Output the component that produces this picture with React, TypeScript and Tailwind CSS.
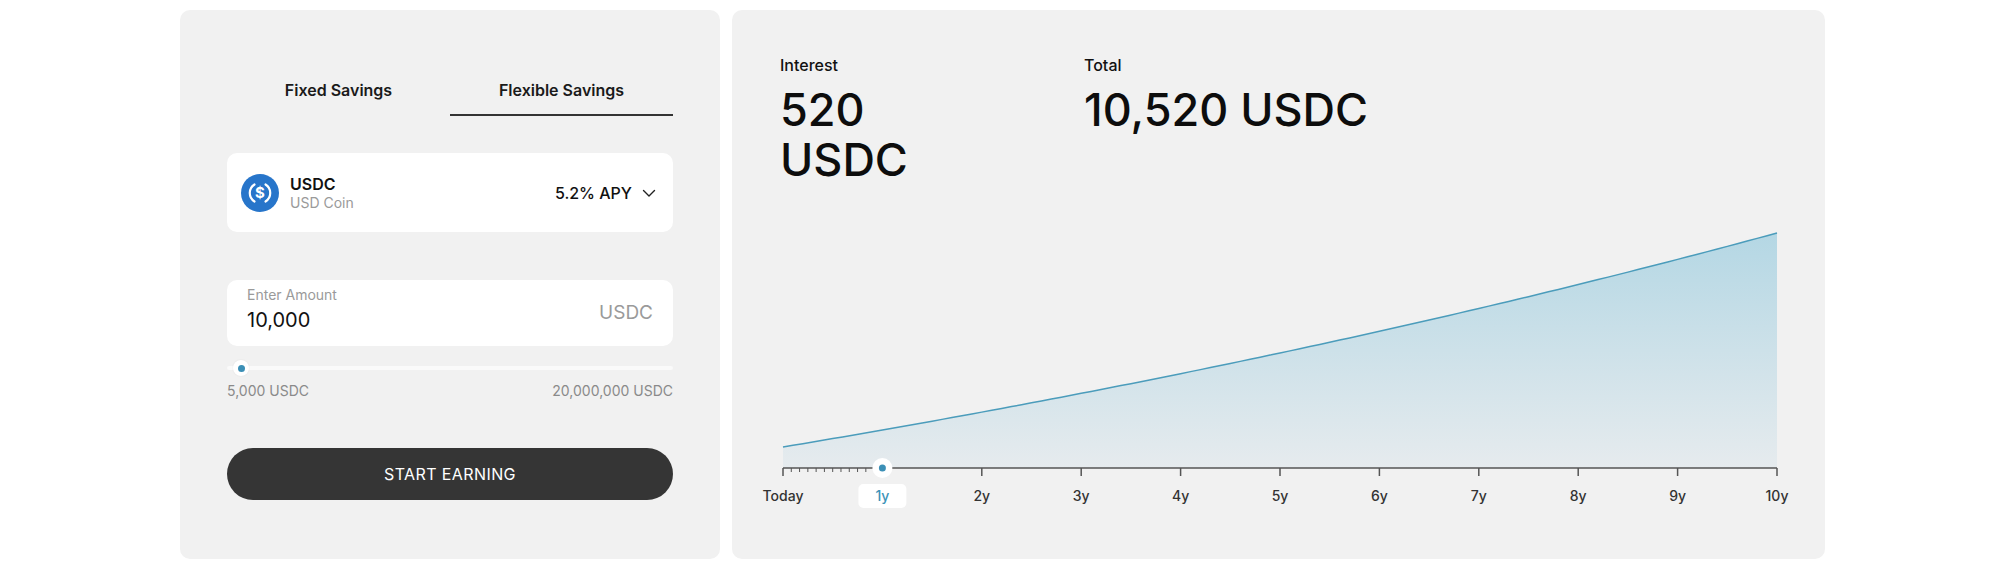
import React from "react";

const years = [0, 1, 2, 3, 4, 5, 6, 7, 8, 9, 10];
const X0 = 3;
const STEP = 99.4;
const BASE = 249;

const xAt = (t: number) => X0 + t * STEP;
const yAt = (t: number) =>
  BASE - (21 + 214 * ((Math.pow(1.05, t) - 1) / (Math.pow(1.05, 10) - 1)));

function buildPaths() {
  const pts: string[] = [];
  for (let i = 0; i <= 100; i++) {
    const t = i / 10;
    pts.push(`${xAt(t).toFixed(2)},${yAt(t).toFixed(2)}`);
  }
  const line = "M" + pts.join(" L");
  const area = `${line} L${xAt(10).toFixed(2)},${BASE} L${xAt(0).toFixed(2)},${BASE} Z`;
  return { line, area };
}

function UsdcIcon() {
  return (
    <svg width="38" height="38" viewBox="0 0 38 38">
      <circle cx="19" cy="19" r="19" fill="#2775CA" />
      <path d="M13.5 10.5 A10 10 0 0 0 13.5 27.5" fill="none" stroke="#fff" strokeWidth="2.2" strokeLinecap="round" />
      <path d="M24.5 10.5 A10 10 0 0 1 24.5 27.5" fill="none" stroke="#fff" strokeWidth="2.2" strokeLinecap="round" />
      <text
        x="19"
        y="19.5"
        textAnchor="middle"
        dominantBaseline="middle"
        fill="#fff"
        fontSize="15"
        fontWeight="700"
        fontFamily="Inter, sans-serif"
      >
        $
      </text>
    </svg>
  );
}

function Chevron() {
  return (
    <svg width="14" height="14" viewBox="0 0 14 14" className="ml-[10px]">
      <path d="M1.5 4.5 L7 10 L12.5 4.5" fill="none" stroke="#222" strokeWidth="1.4" strokeLinecap="round" strokeLinejoin="round" />
    </svg>
  );
}

function SavingsForm() {
  return (
    <div className="w-[540px] h-[549px] shrink-0 rounded-[10px] bg-[#f1f1f1] px-[47px] pt-[68px]">
      {/* tabs */}
      <div className="grid grid-cols-2">
        <button className="pb-[12px] border-b-2 border-transparent text-[16px] leading-[24px] font-semibold text-[#1a1a1a]">
          Fixed Savings
        </button>
        <button className="pb-[12px] border-b-2 border-[#333] text-[16px] leading-[24px] font-semibold text-[#1a1a1a]">
          Flexible Savings
        </button>
      </div>

      {/* asset */}
      <div className="mt-[37px] h-[79px] rounded-[10px] bg-white px-[14px] flex items-center justify-between">
        <div className="flex items-center gap-[11px]">
          <UsdcIcon />
          <div>
            <p className="text-[16px] leading-[20px] font-semibold text-[#111]">USDC</p>
            <p className="text-[14px] leading-[18px] text-[#9a9a9a]">USD Coin</p>
          </div>
        </div>
        <div className="flex items-center pr-[3px]">
          <span className="text-[16px] leading-[20px] font-medium text-[#111]">5.2% APY</span>
          <Chevron />
        </div>
      </div>

      {/* amount */}
      <div className="mt-[48px] h-[66px] rounded-[10px] bg-white px-[20px] flex items-center justify-between">
        <div className="self-start pt-[6px]">
          <p className="text-[14px] leading-[17px] text-[#9a9a9a]">Enter Amount</p>
          <p className="mt-[5px] text-[20px] leading-[24px] text-[#111]">10,000</p>
        </div>
        <span className="text-[19px] leading-[24px] text-[#9a9a9a]">USDC</span>
      </div>

      {/* slider */}
      <div className="mt-[14px] h-[16px] relative flex items-center">
        <div className="h-[4px] w-full rounded-full bg-[#fafafa]" />
        <div className="absolute left-[6px] top-0 w-[16px] h-[16px] rounded-full bg-white shadow-[0_0_2px_rgba(0,0,0,0.08)] flex items-center justify-center">
          <div className="w-[7px] h-[7px] rounded-full bg-[#3b8fb6]" />
        </div>
      </div>
      <div className="mt-[6px] flex justify-between text-[14px] leading-[17px] text-[#8a8a8a]">
        <span>5,000 USDC</span>
        <span>20,000,000 USDC</span>
      </div>

      <button className="mt-[49px] w-full h-[52px] rounded-full bg-[#353535] text-white text-[16px] tracking-[0.4px]">
        START EARNING
      </button>
    </div>
  );
}

function GrowthChart() {
  const { line, area } = buildPaths();
  const months = [1, 2, 3, 4, 5, 6, 7, 8, 9, 10, 11];
  return (
    <svg width="997" height="300" viewBox="0 0 997 300" className="overflow-visible mt-[34px]">
      <defs>
        <linearGradient id="fillGrad" x1="0" y1="14" x2="0" y2={BASE} gradientUnits="userSpaceOnUse">
          <stop offset="0" stopColor="#b4d7e4" />
          <stop offset="1" stopColor="#e6ebee" />
        </linearGradient>
      </defs>
      <path d={area} fill="url(#fillGrad)" />
      <path d={line} fill="none" stroke="#4b9cbb" strokeWidth="1.5" />
      <line x1={xAt(0)} y1={BASE} x2={xAt(10)} y2={BASE} stroke="#555" strokeWidth="1.5" />
      {years.map((t) => (
        <line key={t} x1={xAt(t)} y1={BASE} x2={xAt(t)} y2={BASE + 8} stroke="#555" strokeWidth="1.5" />
      ))}
      {months.map((m) => (
        <line key={m} x1={xAt(m / 12)} y1={BASE} x2={xAt(m / 12)} y2={BASE + 4} stroke="#555" strokeWidth="1" />
      ))}
      <circle cx={xAt(1)} cy={BASE} r="10" fill="#fff" />
      <circle cx={xAt(1)} cy={BASE} r="3.5" fill="#3b8fb6" />
      <rect x={xAt(1) - 24} y="265" width="48" height="24" rx="5" fill="#fff" />
      {years.map((t) => (
        <text
          key={t}
          x={xAt(t)}
          y="278"
          textAnchor="middle"
          dominantBaseline="middle"
          fontSize="14"
          fontWeight="500"
          fontFamily="Inter, sans-serif"
          fill={t === 1 ? "#3d93b8" : "#333"}
        >
          {t === 0 ? "Today" : `${t}y`}
        </text>
      ))}
    </svg>
  );
}

function Projection() {
  return (
    <div className="w-[1093px] h-[549px] shrink-0 rounded-[10px] bg-[#f1f1f1] pl-[48px] pr-[48px] pt-[45px]">
      <div className="flex">
        <div className="w-[304px]">
          <p className="text-[16px] leading-[21px] font-medium text-[#111]">Interest</p>
          <p className="mt-[9px] w-[200px] text-[45px] leading-[50px] font-medium text-[#0d0d0d]">520 USDC</p>
        </div>
        <div>
          <p className="text-[16px] leading-[21px] font-medium text-[#111]">Total</p>
          <p className="mt-[9px] text-[45px] leading-[50px] font-medium text-[#0d0d0d]">10,520 USDC</p>
        </div>
      </div>
      <GrowthChart />
    </div>
  );
}

export default function App() {
  return (
    <div className="w-[2000px] h-[570px] bg-white font-['Inter',sans-serif] pl-[180px] pt-[10px] flex gap-[12px]">
      <SavingsForm />
      <Projection />
    </div>
  );
}
